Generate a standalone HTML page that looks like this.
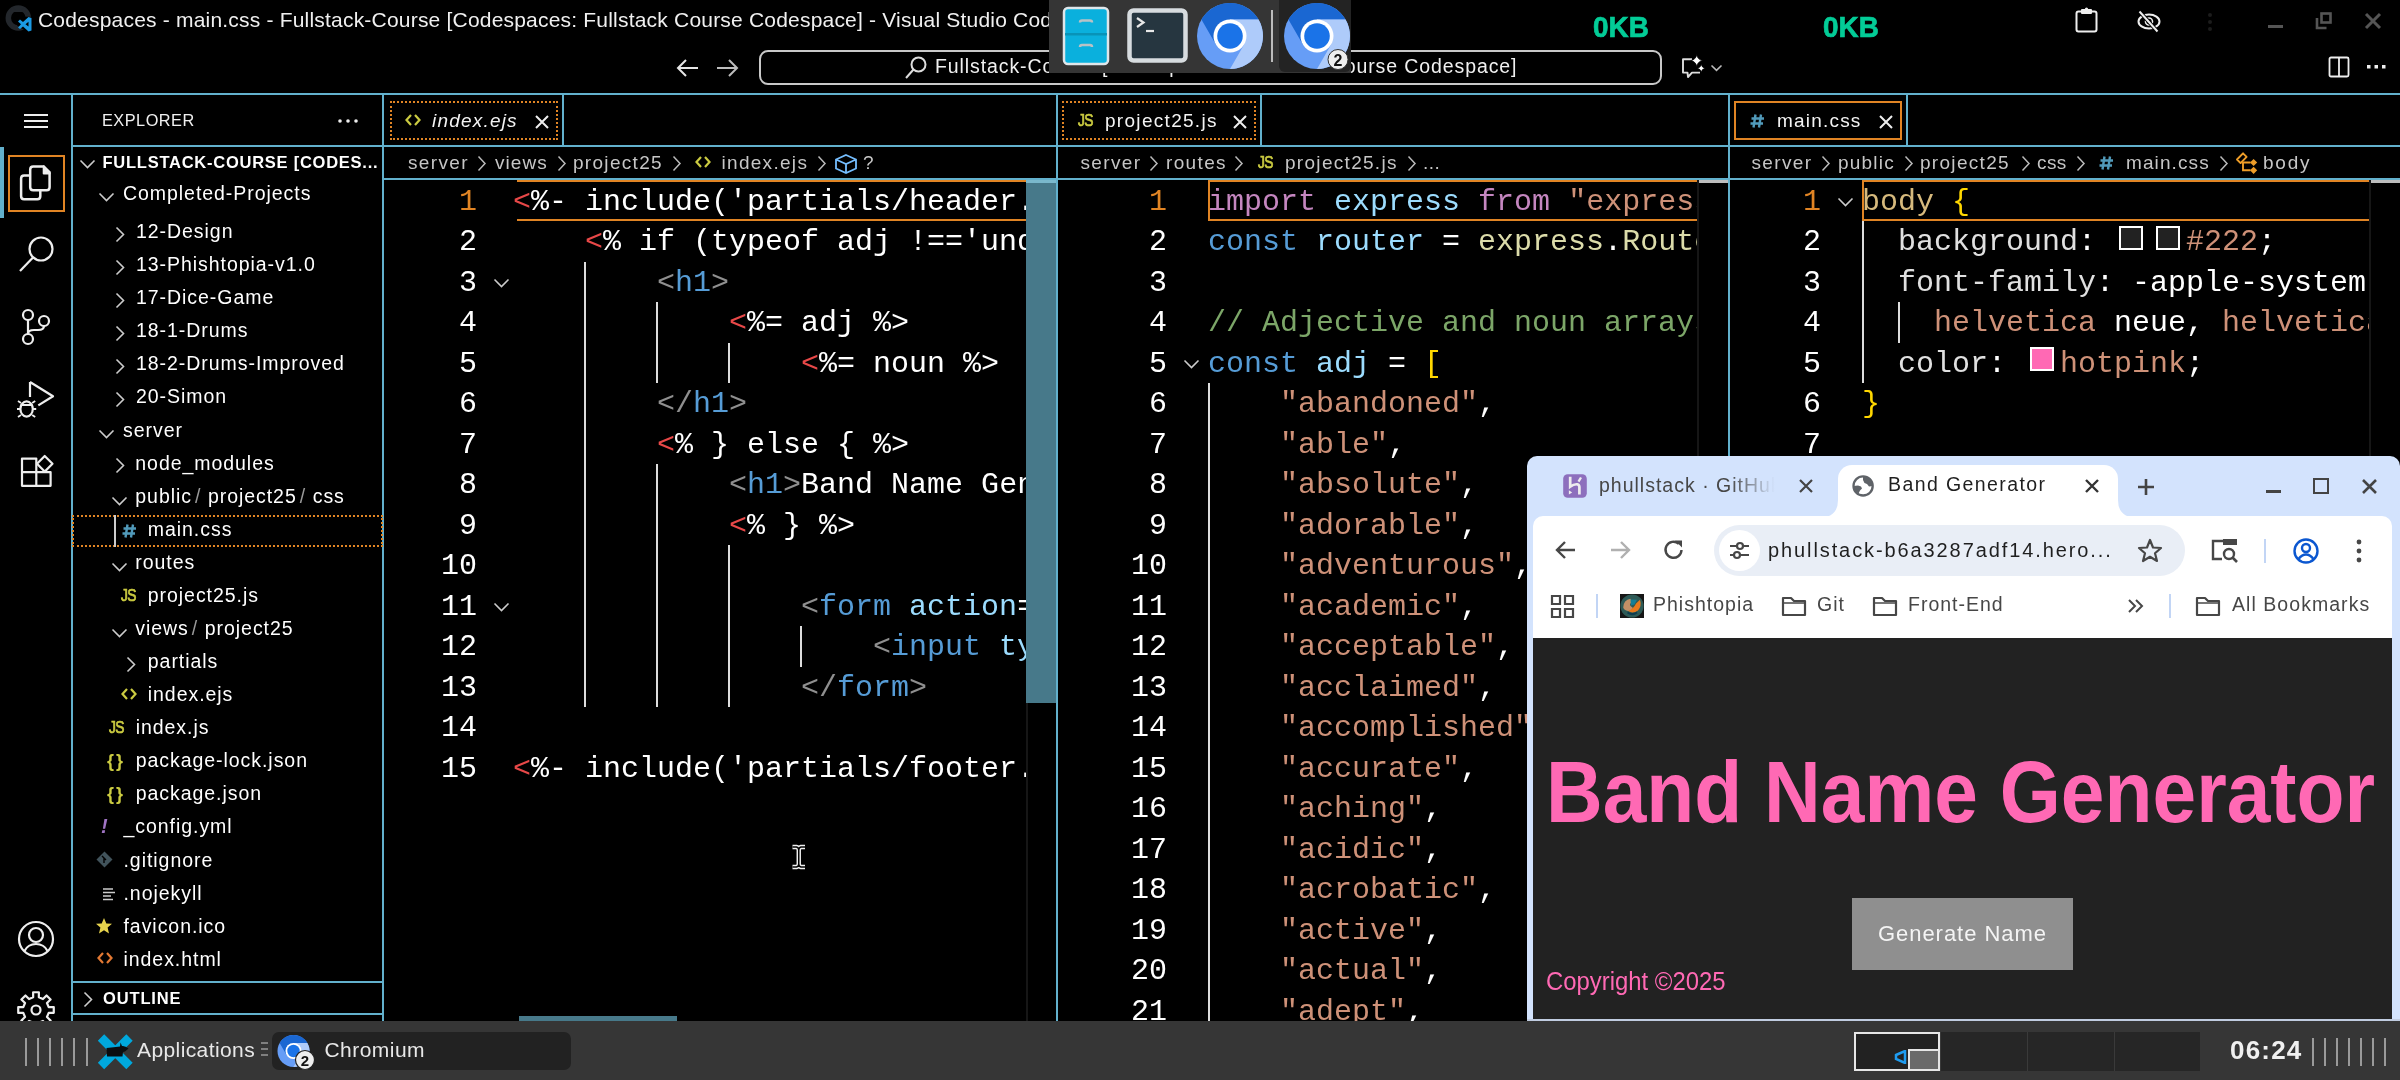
<!DOCTYPE html>
<html><head><meta charset="utf-8"><style>
*{margin:0;padding:0;box-sizing:border-box}
html,body{width:2400px;height:1080px;overflow:hidden;background:#000}
body{position:relative;font-family:"Liberation Sans",sans-serif}
#root{position:absolute;left:0;top:0;width:2400px;height:1080px;overflow:hidden;background:#000;will-change:transform}
div,svg{position:absolute}
.s{white-space:pre;line-height:1.117}
.m{white-space:pre;font-family:"Liberation Mono",monospace;font-size:30px;line-height:40.5px;height:40.5px;color:#fff}
.clip{overflow:hidden}
</style></head><body><div id="root">
<svg style="left:0px;top:0px;" width="36" height="36" viewBox="0 0 36 36"><circle cx="18.3" cy="18" r="10" fill="none" stroke="#23272c" stroke-width="5.5"/><path d="M10 12 L12 7 L16 10 H21 L25 7 L26 12 Z" fill="#23272c"/><path d="M17 20 L23 16.5 L32 17 V31.5 L27 31.5 L17 25.5 L19 22.5 Z" fill="#000"/><path d="M18 21.5 L20 19.5 L23 22 L28.5 17 L31.5 18 V30.5 L28.5 31.5 L23 26.5 L20 29 L18 27.5 L21 24.2 Z" fill="#1b9ae4"/><path d="M25.5 24.2 L28.5 21.8 V26.6 Z" fill="#000"/></svg>
<div class="s" style="left:38px;top:7.99px;font-size:21px;color:#f0f0f0;letter-spacing:0.2px;">Codespaces - main.css - Fullstack-Course [Codespaces: Fullstack Course Codespace] - Visual Studio Code</div>
<svg style="left:676px;top:58px;" width="24" height="20" viewBox="0 0 24 20"><path d="M2 10 H22 M10 2 L2 10 L10 18" fill="none" stroke="#e6e6e6" stroke-width="2"/></svg>
<svg style="left:715px;top:58px;" width="24" height="20" viewBox="0 0 24 20"><path d="M2 10 H22 M14 2 L22 10 L14 18" fill="none" stroke="#bdbdbd" stroke-width="2"/></svg>
<div style="left:759px;top:50px;width:903px;height:35px;border:2px solid #c8c8c8;border-radius:9px"></div>
<svg style="left:904px;top:55px;" width="24" height="25" viewBox="0 0 24 25"><circle cx="14.5" cy="9.5" r="7" fill="none" stroke="#ddd" stroke-width="2"/><path d="M9.5 14.5 L2 23" stroke="#ddd" stroke-width="2"/></svg>
<div class="s" style="left:935px;top:56.35px;font-size:19.5px;color:#f0f0f0;letter-spacing:0.9px;">Fullstack-Course [Codespaces: Fullstack Course Codespace]</div>
<svg style="left:1670px;top:45px;" width="60" height="45" viewBox="0 0 60 45"><path d="M22 14.3 H13 V27.6 H17.5 L18 32 L22 27.6 H30" fill="none" stroke="#ddd" stroke-width="1.9" stroke-linejoin="round"/><path d="M26.7 9.6 Q27.6 14.7 32.7 15.6 Q27.6 16.5 26.7 21.6 Q25.8 16.5 20.7 15.6 Q25.8 14.7 26.7 9.6 Z" fill="#fff" stroke="#000" stroke-width="0.8"/><path d="M31.25 19.3 Q31.9 22.65 35.25 23.3 Q31.9 23.95 31.25 27.3 Q30.6 23.95 27.25 23.3 Q30.6 22.65 31.25 19.3 Z" fill="#fff" stroke="#000" stroke-width="0.8"/><path d="M41.5 20.5 L46.5 25.4 L51.5 20.5" fill="none" stroke="#bbb" stroke-width="1.6"/></svg>
<svg style="left:2328px;top:56px;" width="22" height="22" viewBox="0 0 22 22"><rect x="1.5" y="1.5" width="19" height="19" rx="1.5" fill="none" stroke="#eee" stroke-width="1.8"/><path d="M11 2 V20" stroke="#eee" stroke-width="1.8"/></svg>
<svg style="left:2366px;top:63px;" width="22" height="8" viewBox="0 0 22 8"><rect x="1" y="2" width="3.5" height="3.5" fill="#eee"/><rect x="8.5" y="2" width="3.5" height="3.5" fill="#eee"/><rect x="16" y="2" width="3.5" height="3.5" fill="#eee"/></svg>
<div class="s" style="left:1592.5px;top:10.14px;font-size:30px;color:#03cc97;font-weight:bold;transform:scaleX(0.93);transform-origin:0 0;-webkit-text-stroke:0.7px #03cc97;">0KB</div>
<div class="s" style="left:1822.5px;top:10.14px;font-size:30px;color:#03cc97;font-weight:bold;transform:scaleX(0.93);transform-origin:0 0;-webkit-text-stroke:0.7px #03cc97;">0KB</div>
<svg style="left:2074px;top:7px;" width="26" height="26" viewBox="0 0 26 26"><rect x="2.5" y="4.5" width="20" height="20" rx="2" fill="none" stroke="#eee" stroke-width="2"/><rect x="7" y="2" width="11" height="5" rx="1" fill="#eee"/><circle cx="12.5" cy="2" r="1.6" fill="#eee"/></svg>
<svg style="left:2136px;top:10px;" width="28" height="24" viewBox="0 0 28 24"><ellipse cx="13" cy="11.5" rx="10.5" ry="7" fill="none" stroke="#eee" stroke-width="2"/><circle cx="13" cy="11.5" r="3.5" fill="none" stroke="#eee" stroke-width="1.6"/><path d="M4 2 L21 21" stroke="#000" stroke-width="4"/><path d="M3.5 1.5 L21.5 21.5" stroke="#eee" stroke-width="2"/></svg>
<svg style="left:2206px;top:12px;" width="8" height="20" viewBox="0 0 8 20"><circle cx="4" cy="3" r="2" fill="#1c1c1c"/><circle cx="4" cy="10" r="2" fill="#1c1c1c"/><circle cx="4" cy="17" r="2" fill="#1c1c1c"/></svg>
<div style="left:2268px;top:25px;width:15px;height:3px;background:#555"></div>
<svg style="left:2314px;top:11px;" width="20" height="20" viewBox="0 0 20 20"><rect x="7.5" y="2.5" width="9" height="9" fill="none" stroke="#555" stroke-width="2.6"/><path d="M3 7 V17 H12.5" fill="none" stroke="#555" stroke-width="2.6"/></svg>
<svg style="left:2364px;top:12px;" width="18" height="18" viewBox="0 0 18 18"><path d="M2 2 L16 16 M16 2 L2 16" stroke="#555" stroke-width="3"/></svg>
<div style="left:0px;top:93px;width:2400px;height:2px;background:#62b0cc"></div>
<div style="left:71px;top:93px;width:2px;height:928px;background:#62b0cc"></div>
<div style="left:382px;top:93px;width:2px;height:928px;background:#62b0cc"></div>
<div style="left:1056px;top:93px;width:2px;height:928px;background:#62b0cc"></div>
<div style="left:1728px;top:93px;width:2px;height:928px;background:#62b0cc"></div>
<div style="left:71px;top:145px;width:2329px;height:2px;background:#62b0cc"></div>
<div style="left:383px;top:178px;width:2017px;height:2px;background:#62b0cc"></div>
<div style="left:562px;top:93px;width:2px;height:53px;background:#62b0cc"></div>
<div style="left:1260px;top:93px;width:2px;height:53px;background:#62b0cc"></div>
<div style="left:1906px;top:93px;width:2px;height:53px;background:#62b0cc"></div>
<div style="left:71px;top:981px;width:312px;height:2px;background:#62b0cc"></div>
<div style="left:71px;top:1013px;width:312px;height:2px;background:#62b0cc"></div>
<svg style="left:22px;top:110px;" width="28" height="22" viewBox="0 0 28 22"><path d="M2 5 H26 M2 11 H26 M2 17 H26" stroke="#eee" stroke-width="2"/></svg>
<div style="left:0px;top:147px;width:4px;height:71px;background:#62b0cc"></div>
<div style="left:8px;top:155px;width:57px;height:57px;border:2px solid #e08424"></div>
<svg style="left:10px;top:155px;" width="52" height="56" viewBox="0 0 52 56"><path d="M23.2 11.4 H33.7 L39.6 17.3 V32.2 Q39.6 35.2 36.6 35.2 H23.2 Q20.2 35.2 20.2 32.2 V14.4 Q20.2 11.4 23.2 11.4 Z" fill="none" stroke="#eee" stroke-width="2.5"/><path d="M33.7 11.4 V18.4 H39.6 Z" fill="#eee" stroke="#eee" stroke-width="2" stroke-linejoin="round"/><path d="M20.2 20.5 H14.1 Q11.1 20.5 11.1 23.5 V41.3 Q11.1 44.3 14.1 44.3 H27.3 Q30.3 44.3 30.3 41.3 V35.2" fill="none" stroke="#eee" stroke-width="2.5"/></svg>
<svg style="left:16px;top:234px;" width="40" height="42" viewBox="0 0 40 42"><circle cx="25" cy="15" r="11.5" fill="none" stroke="#eee" stroke-width="2.2"/><path d="M17 23.5 L4 37" stroke="#eee" stroke-width="2.2"/></svg>
<svg style="left:16px;top:300px;" width="40" height="50" viewBox="0 0 40 50"><circle cx="12" cy="15" r="5" fill="none" stroke="#eee" stroke-width="2.2"/><circle cx="28" cy="21" r="5" fill="none" stroke="#eee" stroke-width="2.2"/><circle cx="12" cy="39" r="5" fill="none" stroke="#eee" stroke-width="2.2"/><path d="M12 20 V34 M28 26 Q28 30 22 30 H18 Q12 30 12 34" fill="none" stroke="#eee" stroke-width="2.2"/></svg>
<svg style="left:0px;top:370px;" width="72" height="60" viewBox="0 0 72 60"><path d="M30 12 V27 M30 12 L53 26.3 L38.3 35.4" fill="none" stroke="#eee" stroke-width="2.2" stroke-linejoin="round"/><ellipse cx="26.6" cy="39" rx="6.2" ry="7.6" fill="none" stroke="#eee" stroke-width="2.2"/><path d="M20.5 35 H32.7" stroke="#eee" stroke-width="2"/><path d="M18 31 L21 33 M17 39 H20.5 M18 47 L21 45 M35.2 31 L32.2 33 M36.2 39 H32.7 M35.2 47 L32.2 45" stroke="#eee" stroke-width="1.8"/></svg>
<svg style="left:0px;top:444px;" width="72" height="50" viewBox="0 0 72 50"><path d="M22 14.6 H36.3 V41.8 H22 Z M22 28.2 H50.6 V41.8 H36.3" fill="none" stroke="#eee" stroke-width="2.2" stroke-linejoin="round"/><path d="M44.7 12 L52.5 19.8 L44.7 27.6 L37 19.8 Z" fill="none" stroke="#eee" stroke-width="2.2" stroke-linejoin="round"/></svg>
<svg style="left:16px;top:919px;" width="40" height="40" viewBox="0 0 40 40"><circle cx="20" cy="20" r="17" fill="none" stroke="#eee" stroke-width="2.2"/><circle cx="20" cy="16" r="7" fill="none" stroke="#eee" stroke-width="2.2"/><path d="M8.5 32 Q12 25 20 25 Q28 25 31.5 32" fill="none" stroke="#eee" stroke-width="2.2"/></svg>
<div class="clip" style="left:10px;top:985px;width:52px;height:36px">
<svg style="left:0;top:0" width="52" height="52" viewBox="0 0 52 52"><polygon points="38.69,22.16 43.77,22.13 43.77,27.87 38.69,27.84 36.98,31.96 40.59,35.54 36.54,39.59 32.96,35.98 28.84,37.69 28.87,42.77 23.13,42.77 23.16,37.69 19.04,35.98 15.46,39.59 11.41,35.54 15.02,31.96 13.31,27.84 8.23,27.87 8.23,22.13 13.31,22.16 15.02,18.04 11.41,14.46 15.46,10.41 19.04,14.02 23.16,12.31 23.13,7.23 28.87,7.23 28.84,12.31 32.96,14.02 36.54,10.41 40.59,14.46 36.98,18.04" fill="none" stroke="#eee" stroke-width="2.2" stroke-linejoin="round"/><circle cx="26" cy="25" r="4.5" fill="none" stroke="#eee" stroke-width="2.2"/></svg>
</div>
<div class="s" style="left:102px;top:110.84px;font-size:16.3px;color:#f0f0f0;letter-spacing:0.5px;">EXPLORER</div>
<svg style="left:337px;top:117px;" width="22" height="8" viewBox="0 0 22 8"><circle cx="3" cy="4" r="1.8" fill="#eee"/><circle cx="11" cy="4" r="1.8" fill="#eee"/><circle cx="19" cy="4" r="1.8" fill="#eee"/></svg>
<svg style="left:79px;top:159px;" width="17" height="10" viewBox="0 0 17 10"><path d="M1.5 1.5 L8.5 8.5 L15.5 1.5" fill="none" stroke="#ccc" stroke-width="1.6"/></svg>
<div class="s" style="left:102.5px;top:153.06px;font-size:16.5px;color:#fff;letter-spacing:0.75px;font-weight:bold;">FULLSTACK-COURSE [CODES...</div>
<svg style="left:98px;top:192px;" width="17" height="10" viewBox="0 0 17 10"><path d="M1.5 1.5 L8.5 8.5 L15.5 1.5" fill="none" stroke="#ccc" stroke-width="1.6"/></svg>
<div class="s" style="left:123px;top:183.35px;font-size:19.5px;color:#fff;letter-spacing:0.95px;">Completed-Projects</div>
<svg style="left:115px;top:225.89999999999998px;" width="10" height="17" viewBox="0 0 10 17"><path d="M1.5 1.5 L8.5 8.5 L1.5 15.5" fill="none" stroke="#ccc" stroke-width="1.6"/></svg>
<div class="s" style="left:136px;top:221.05px;font-size:19.5px;color:#fff;letter-spacing:0.95px;">12-Design</div>
<svg style="left:115px;top:258.97999999999996px;" width="10" height="17" viewBox="0 0 10 17"><path d="M1.5 1.5 L8.5 8.5 L1.5 15.5" fill="none" stroke="#ccc" stroke-width="1.6"/></svg>
<div class="s" style="left:136px;top:254.13px;font-size:19.5px;color:#fff;letter-spacing:0.95px;">13-Phishtopia-v1.0</div>
<svg style="left:115px;top:292.06px;" width="10" height="17" viewBox="0 0 10 17"><path d="M1.5 1.5 L8.5 8.5 L1.5 15.5" fill="none" stroke="#ccc" stroke-width="1.6"/></svg>
<div class="s" style="left:136px;top:287.21px;font-size:19.5px;color:#fff;letter-spacing:0.95px;">17-Dice-Game</div>
<svg style="left:115px;top:325.14px;" width="10" height="17" viewBox="0 0 10 17"><path d="M1.5 1.5 L8.5 8.5 L1.5 15.5" fill="none" stroke="#ccc" stroke-width="1.6"/></svg>
<div class="s" style="left:136px;top:320.29px;font-size:19.5px;color:#fff;letter-spacing:0.95px;">18-1-Drums</div>
<svg style="left:115px;top:358.21999999999997px;" width="10" height="17" viewBox="0 0 10 17"><path d="M1.5 1.5 L8.5 8.5 L1.5 15.5" fill="none" stroke="#ccc" stroke-width="1.6"/></svg>
<div class="s" style="left:136px;top:353.37px;font-size:19.5px;color:#fff;letter-spacing:0.95px;">18-2-Drums-Improved</div>
<svg style="left:115px;top:391.29999999999995px;" width="10" height="17" viewBox="0 0 10 17"><path d="M1.5 1.5 L8.5 8.5 L1.5 15.5" fill="none" stroke="#ccc" stroke-width="1.6"/></svg>
<div class="s" style="left:136px;top:386.45px;font-size:19.5px;color:#fff;letter-spacing:0.95px;">20-Simon</div>
<svg style="left:98px;top:429.37999999999994px;" width="17" height="10" viewBox="0 0 17 10"><path d="M1.5 1.5 L8.5 8.5 L15.5 1.5" fill="none" stroke="#ccc" stroke-width="1.6"/></svg>
<div class="s" style="left:123px;top:419.53px;font-size:19.5px;color:#fff;letter-spacing:0.95px;">server</div>
<svg style="left:115px;top:457.46px;" width="10" height="17" viewBox="0 0 10 17"><path d="M1.5 1.5 L8.5 8.5 L1.5 15.5" fill="none" stroke="#ccc" stroke-width="1.6"/></svg>
<div class="s" style="left:135.3px;top:452.61px;font-size:19.5px;color:#fff;letter-spacing:0.95px;">node_modules</div>
<svg style="left:111px;top:495.53999999999996px;" width="17" height="10" viewBox="0 0 17 10"><path d="M1.5 1.5 L8.5 8.5 L15.5 1.5" fill="none" stroke="#ccc" stroke-width="1.6"/></svg>
<div class="s" style="left:135.3px;top:485.69px;font-size:19.5px;color:#fff;letter-spacing:0.95px;">public</div>
<div class="s" style="left:194.94375000000002px;top:485.69px;font-size:19.5px;color:#999;">/</div>
<div class="s" style="left:207.94375000000002px;top:485.69px;font-size:19.5px;color:#fff;letter-spacing:0.95px;">project25</div>
<div class="s" style="left:299.71796875px;top:485.69px;font-size:19.5px;color:#999;">/</div>
<div class="s" style="left:312.71796875px;top:485.69px;font-size:19.5px;color:#fff;letter-spacing:0.95px;">css</div>
<div style="left:72px;top:515px;width:311px;height:32px;border:2px dotted #e08424"></div>
<div style="left:114px;top:515px;width:2px;height:32px;background:#ccc"></div>
<svg style="left:122px;top:524px;" width="15" height="14" viewBox="0 0 15 14"><path d="M5.5 0.5 L3.5 13.5 M11 0.5 L9 13.5 M1.5 4.5 H14 M0.5 9.5 H13" stroke="#519aba" stroke-width="2.4"/></svg>
<div class="s" style="left:147.8px;top:518.77px;font-size:19.5px;color:#fff;letter-spacing:0.95px;">main.css</div>
<svg style="left:111px;top:561.7px;" width="17" height="10" viewBox="0 0 17 10"><path d="M1.5 1.5 L8.5 8.5 L15.5 1.5" fill="none" stroke="#ccc" stroke-width="1.6"/></svg>
<div class="s" style="left:135.3px;top:551.85px;font-size:19.5px;color:#fff;letter-spacing:0.95px;">routes</div>
<div class="s" style="left:121px;top:587.10px;font-size:16px;color:#cbcb41;letter-spacing:-0.6px;transform:scaleX(0.86);transform-origin:0 0;-webkit-text-stroke:0.7px #cbcb41;">JS</div>
<div class="s" style="left:147.8px;top:584.93px;font-size:19.5px;color:#fff;letter-spacing:0.95px;">project25.js</div>
<svg style="left:111px;top:627.86px;" width="17" height="10" viewBox="0 0 17 10"><path d="M1.5 1.5 L8.5 8.5 L15.5 1.5" fill="none" stroke="#ccc" stroke-width="1.6"/></svg>
<div class="s" style="left:135.3px;top:618.01px;font-size:19.5px;color:#fff;letter-spacing:0.95px;">views</div>
<div class="s" style="left:191.8px;top:618.01px;font-size:19.5px;color:#999;">/</div>
<div class="s" style="left:204.8px;top:618.01px;font-size:19.5px;color:#fff;letter-spacing:0.95px;">project25</div>
<svg style="left:126px;top:655.94px;" width="10" height="17" viewBox="0 0 10 17"><path d="M1.5 1.5 L8.5 8.5 L1.5 15.5" fill="none" stroke="#ccc" stroke-width="1.6"/></svg>
<div class="s" style="left:147.8px;top:651.09px;font-size:19.5px;color:#fff;letter-spacing:0.95px;">partials</div>
<svg style="left:121px;top:687.8199999999999px;" width="16" height="12" viewBox="0 0 16 12"><path d="M6 1 L1.5 6 L6 11 M10 1 L14.5 6 L10 11" fill="none" stroke="#cbcb41" stroke-width="2.2"/></svg>
<div class="s" style="left:147.8px;top:684.17px;font-size:19.5px;color:#fff;letter-spacing:0.95px;">index.ejs</div>
<div class="s" style="left:108.5px;top:719.42px;font-size:16px;color:#cbcb41;letter-spacing:-0.6px;transform:scaleX(0.86);transform-origin:0 0;-webkit-text-stroke:0.7px #cbcb41;">JS</div>
<div class="s" style="left:135.7px;top:717.25px;font-size:19.5px;color:#fff;letter-spacing:0.95px;">index.js</div>
<div class="s" style="left:107px;top:750.68px;font-size:18px;color:#cbcb41;letter-spacing:2px;font-weight:bold;">{}</div>
<div class="s" style="left:135.7px;top:750.33px;font-size:19.5px;color:#fff;letter-spacing:0.95px;">package-lock.json</div>
<div class="s" style="left:107px;top:783.76px;font-size:18px;color:#cbcb41;letter-spacing:2px;font-weight:bold;">{}</div>
<div class="s" style="left:135.7px;top:783.41px;font-size:19.5px;color:#fff;letter-spacing:0.95px;">package.json</div>
<div class="s" style="left:101px;top:815.03px;font-size:20px;color:#a074c4;font-weight:bold;font-style:italic;">!</div>
<div class="s" style="left:123.5px;top:816.49px;font-size:19.5px;color:#fff;letter-spacing:0.95px;">_config.yml</div>
<svg style="left:96px;top:851.4200000000001px;" width="17" height="17" viewBox="0 0 17 17"><path d="M8.5 0.5 L16.5 8.5 L8.5 16.5 L0.5 8.5 Z" fill="#41535b"/><path d="M6 5 L10 9 M8 7 V12" stroke="#000" stroke-width="1.4"/></svg>
<div class="s" style="left:123.5px;top:849.57px;font-size:19.5px;color:#fff;letter-spacing:0.95px;">.gitignore</div>
<svg style="left:102px;top:886.5px;" width="14" height="14" viewBox="0 0 14 14"><path d="M1 2 H11 M1 5.5 H13 M1 9 H9 M1 12.5 H11" stroke="#ccc" stroke-width="1.6"/></svg>
<div class="s" style="left:123.5px;top:882.65px;font-size:19.5px;color:#fff;letter-spacing:0.95px;">.nojekyll</div>
<svg style="left:95px;top:916.5799999999999px;" width="18" height="18" viewBox="0 0 18 18"><path d="M9 1 L11.3 6.5 L17 6.8 L12.6 10.6 L14 16.5 L9 13.3 L4 16.5 L5.4 10.6 L1 6.8 L6.7 6.5 Z" fill="#e8d44d"/></svg>
<div class="s" style="left:123.5px;top:915.73px;font-size:19.5px;color:#fff;letter-spacing:0.95px;">favicon.ico</div>
<svg style="left:97px;top:952.46px;" width="16" height="12" viewBox="0 0 16 12"><path d="M6 1 L1.5 6 L6 11 M10 1 L14.5 6 L10 11" fill="none" stroke="#e37933" stroke-width="2.2"/></svg>
<div class="s" style="left:123.5px;top:948.81px;font-size:19.5px;color:#fff;letter-spacing:0.95px;">index.html</div>
<svg style="left:83px;top:991px;" width="10" height="17" viewBox="0 0 10 17"><path d="M1.5 1.5 L8.5 8.5 L1.5 15.5" fill="none" stroke="#ccc" stroke-width="1.6"/></svg>
<div class="s" style="left:103px;top:989.06px;font-size:16.5px;color:#fff;letter-spacing:0.85px;font-weight:bold;">OUTLINE</div>
<div style="left:390px;top:101px;width:168px;height:39px;border:2px dotted #e08424"></div>
<svg style="left:405px;top:113.5px;" width="17" height="13" viewBox="0 0 17 13"><path d="M6 1 L1.5 6 L6 11 M10 1 L14.5 6 L10 11" fill="none" stroke="#cbcb41" stroke-width="2.2"/></svg>
<div class="s" style="left:432px;top:110.00px;font-size:19px;color:#f4f4f4;letter-spacing:1.2px;font-style:italic;">index.ejs</div>
<svg style="left:534px;top:114px;" width="16" height="16" viewBox="0 0 16 16"><path d="M2 2 L14 14 M14 2 L2 14" stroke="#eee" stroke-width="2"/></svg>
<div class="s" style="left:408px;top:151.80px;font-size:19px;color:#c6c6c6;letter-spacing:1.35px;">server</div>
<svg style="left:477px;top:155px;" width="10" height="17" viewBox="0 0 10 17"><path d="M1.5 1.5 L8 8.5 L1.5 15.5" fill="none" stroke="#bbb" stroke-width="1.5"/></svg>
<div class="s" style="left:495px;top:151.80px;font-size:19px;color:#c6c6c6;letter-spacing:1.05px;">views</div>
<svg style="left:557px;top:155px;" width="10" height="17" viewBox="0 0 10 17"><path d="M1.5 1.5 L8 8.5 L1.5 15.5" fill="none" stroke="#bbb" stroke-width="1.5"/></svg>
<div class="s" style="left:573px;top:151.80px;font-size:19px;color:#c6c6c6;letter-spacing:1.3px;">project25</div>
<svg style="left:672px;top:155px;" width="10" height="17" viewBox="0 0 10 17"><path d="M1.5 1.5 L8 8.5 L1.5 15.5" fill="none" stroke="#bbb" stroke-width="1.5"/></svg>
<svg style="left:695px;top:155.5px;" width="18" height="13" viewBox="0 0 18 13"><path d="M6 1 L1.5 6 L6 11 M10 1 L14.5 6 L10 11" fill="none" stroke="#cbcb41" stroke-width="2.2"/></svg>
<div class="s" style="left:721.5px;top:151.80px;font-size:19px;color:#c6c6c6;letter-spacing:1.3px;">index.ejs</div>
<svg style="left:817px;top:155px;" width="10" height="17" viewBox="0 0 10 17"><path d="M1.5 1.5 L8 8.5 L1.5 15.5" fill="none" stroke="#bbb" stroke-width="1.5"/></svg>
<svg style="left:834px;top:153px;" width="24" height="22" viewBox="0 0 24 22"><path d="M12 2 L22 6.5 V15.5 L12 20 L2 15.5 V6.5 Z M2 6.5 L12 11 L22 6.5 M12 11 V20" fill="none" stroke="#75beff" stroke-width="1.8"/></svg>
<div class="s" style="left:863px;top:151.80px;font-size:19px;color:#c6c6c6;">?</div>
<div style="left:517px;top:180px;width:509px;height:41px;border:2px solid #e08424;border-right:none;border-left:none;"></div>
<div class="m" style="left:397px;top:181.70px;width:80px;text-align:right;color:#e08424">1</div>
<div class="m" style="left:397px;top:222.20px;width:80px;text-align:right;color:#fff">2</div>
<div class="m" style="left:397px;top:262.70px;width:80px;text-align:right;color:#fff">3</div>
<div class="m" style="left:397px;top:303.20px;width:80px;text-align:right;color:#fff">4</div>
<div class="m" style="left:397px;top:343.70px;width:80px;text-align:right;color:#fff">5</div>
<div class="m" style="left:397px;top:384.20px;width:80px;text-align:right;color:#fff">6</div>
<div class="m" style="left:397px;top:424.70px;width:80px;text-align:right;color:#fff">7</div>
<div class="m" style="left:397px;top:465.20px;width:80px;text-align:right;color:#fff">8</div>
<div class="m" style="left:397px;top:505.70px;width:80px;text-align:right;color:#fff">9</div>
<div class="m" style="left:397px;top:546.20px;width:80px;text-align:right;color:#fff">10</div>
<div class="m" style="left:397px;top:586.70px;width:80px;text-align:right;color:#fff">11</div>
<div class="m" style="left:397px;top:627.20px;width:80px;text-align:right;color:#fff">12</div>
<div class="m" style="left:397px;top:667.70px;width:80px;text-align:right;color:#fff">13</div>
<div class="m" style="left:397px;top:708.20px;width:80px;text-align:right;color:#fff">14</div>
<div class="m" style="left:397px;top:748.70px;width:80px;text-align:right;color:#fff">15</div>
<svg style="left:493px;top:278px;" width="17" height="10" viewBox="0 0 17 10"><path d="M1.5 1.5 L8.5 8.5 L15.5 1.5" fill="none" stroke="#ccc" stroke-width="1.6"/></svg>
<svg style="left:493px;top:602px;" width="17" height="10" viewBox="0 0 17 10"><path d="M1.5 1.5 L8.5 8.5 L15.5 1.5" fill="none" stroke="#ccc" stroke-width="1.6"/></svg>
<div style="left:584px;top:261.5px;width:2px;height:445.5px;background:#ddd;width:1.5px"></div>
<div style="left:656px;top:302.0px;width:2px;height:81.0px;background:#ddd;width:1.5px"></div>
<div style="left:656px;top:464.0px;width:2px;height:243.0px;background:#ddd;width:1.5px"></div>
<div style="left:728px;top:342.5px;width:2px;height:40.5px;background:#ddd;width:1.5px"></div>
<div style="left:728px;top:545.0px;width:2px;height:162.0px;background:#ddd;width:1.5px"></div>
<div style="left:800px;top:626.0px;width:2px;height:40.5px;background:#ddd;width:1.5px"></div>
<div class="m" style="left:513px;top:181.70px;width:513px;overflow:hidden"><span style="color:#e84848">&lt;</span><span style="color:#ffffff">%- include('partials/header.ejs') %&gt;</span></div>
<div class="m" style="left:513px;top:222.20px;width:513px;overflow:hidden"><span style="color:#ffffff">    </span><span style="color:#e84848">&lt;</span><span style="color:#ffffff">% if (typeof adj !=='undefined') { %&gt;</span></div>
<div class="m" style="left:513px;top:262.70px;width:513px;overflow:hidden"><span style="color:#ffffff">        </span><span style="color:#8f8f8f">&lt;</span><span style="color:#569cd6">h1</span><span style="color:#8f8f8f">&gt;</span></div>
<div class="m" style="left:513px;top:303.20px;width:513px;overflow:hidden"><span style="color:#ffffff">            </span><span style="color:#e84848">&lt;</span><span style="color:#ffffff">%= adj %&gt;</span></div>
<div class="m" style="left:513px;top:343.70px;width:513px;overflow:hidden"><span style="color:#ffffff">                </span><span style="color:#e84848">&lt;</span><span style="color:#ffffff">%= noun %&gt;</span></div>
<div class="m" style="left:513px;top:384.20px;width:513px;overflow:hidden"><span style="color:#ffffff">        </span><span style="color:#8f8f8f">&lt;/</span><span style="color:#569cd6">h1</span><span style="color:#8f8f8f">&gt;</span></div>
<div class="m" style="left:513px;top:424.70px;width:513px;overflow:hidden"><span style="color:#ffffff">        </span><span style="color:#e84848">&lt;</span><span style="color:#ffffff">% } else { %&gt;</span></div>
<div class="m" style="left:513px;top:465.20px;width:513px;overflow:hidden"><span style="color:#ffffff">            </span><span style="color:#8f8f8f">&lt;</span><span style="color:#569cd6">h1</span><span style="color:#8f8f8f">&gt;</span><span style="color:#ffffff">Band Name Generator</span></div>
<div class="m" style="left:513px;top:505.70px;width:513px;overflow:hidden"><span style="color:#ffffff">            </span><span style="color:#e84848">&lt;</span><span style="color:#ffffff">% } %&gt;</span></div>
<div class="m" style="left:513px;top:586.70px;width:513px;overflow:hidden"><span style="color:#ffffff">                </span><span style="color:#8f8f8f">&lt;</span><span style="color:#569cd6">form</span><span style="color:#ffffff"> </span><span style="color:#9cdcfe">action</span><span style="color:#ffffff">=</span></div>
<div class="m" style="left:513px;top:627.20px;width:513px;overflow:hidden"><span style="color:#ffffff">                    </span><span style="color:#8f8f8f">&lt;</span><span style="color:#569cd6">input</span><span style="color:#ffffff"> </span><span style="color:#9cdcfe">type</span></div>
<div class="m" style="left:513px;top:667.70px;width:513px;overflow:hidden"><span style="color:#ffffff">                </span><span style="color:#8f8f8f">&lt;/</span><span style="color:#569cd6">form</span><span style="color:#8f8f8f">&gt;</span></div>
<div class="m" style="left:513px;top:748.70px;width:513px;overflow:hidden"><span style="color:#e84848">&lt;</span><span style="color:#ffffff">%- include('partials/footer.ejs') %&gt;</span></div>
<div style="left:1026px;top:180px;width:30px;height:523px;background:#47798a"></div>
<div style="left:1026px;top:180px;width:30px;height:3px;background:#7ab8cc"></div>
<div style="left:519px;top:1016px;width:158px;height:5px;background:#47798a"></div>
<div style="left:1026px;top:703px;width:1.5px;height:318px;background:#161616"></div>
<div style="left:1062px;top:101px;width:194px;height:39px;border:2px dotted #e08424"></div>
<div class="s" style="left:1077.5px;top:111.52px;font-size:16px;color:#cbcb41;letter-spacing:-0.6px;transform:scaleX(0.86);transform-origin:0 0;-webkit-text-stroke:0.7px #cbcb41;">JS</div>
<div class="s" style="left:1105px;top:110.00px;font-size:19px;color:#f4f4f4;letter-spacing:1.3px;">project25.js</div>
<svg style="left:1232px;top:114px;" width="16" height="16" viewBox="0 0 16 16"><path d="M2 2 L14 14 M14 2 L2 14" stroke="#eee" stroke-width="2"/></svg>
<div class="s" style="left:1080.5px;top:151.80px;font-size:19px;color:#c6c6c6;letter-spacing:1.35px;">server</div>
<svg style="left:1149px;top:155px;" width="10" height="17" viewBox="0 0 10 17"><path d="M1.5 1.5 L8 8.5 L1.5 15.5" fill="none" stroke="#bbb" stroke-width="1.5"/></svg>
<div class="s" style="left:1166px;top:151.80px;font-size:19px;color:#c6c6c6;letter-spacing:1.35px;">routes</div>
<svg style="left:1234px;top:155px;" width="10" height="17" viewBox="0 0 10 17"><path d="M1.5 1.5 L8 8.5 L1.5 15.5" fill="none" stroke="#bbb" stroke-width="1.5"/></svg>
<div class="s" style="left:1258px;top:153.52px;font-size:16px;color:#cbcb41;letter-spacing:-0.6px;transform:scaleX(0.86);transform-origin:0 0;-webkit-text-stroke:0.7px #cbcb41;">JS</div>
<div class="s" style="left:1285px;top:151.80px;font-size:19px;color:#c6c6c6;letter-spacing:1.3px;">project25.js</div>
<svg style="left:1407px;top:155px;" width="10" height="17" viewBox="0 0 10 17"><path d="M1.5 1.5 L8 8.5 L1.5 15.5" fill="none" stroke="#bbb" stroke-width="1.5"/></svg>
<div class="s" style="left:1423px;top:151.80px;font-size:19px;color:#c6c6c6;letter-spacing:0.5px;">...</div>
<div style="left:1208px;top:180px;width:490px;height:41px;border:2px solid #e08424;border-right:none;"></div>
<div class="m" style="left:1087px;top:181.70px;width:80px;text-align:right;color:#e08424">1</div>
<div class="m" style="left:1087px;top:222.20px;width:80px;text-align:right;color:#fff">2</div>
<div class="m" style="left:1087px;top:262.70px;width:80px;text-align:right;color:#fff">3</div>
<div class="m" style="left:1087px;top:303.20px;width:80px;text-align:right;color:#fff">4</div>
<div class="m" style="left:1087px;top:343.70px;width:80px;text-align:right;color:#fff">5</div>
<div class="m" style="left:1087px;top:384.20px;width:80px;text-align:right;color:#fff">6</div>
<div class="m" style="left:1087px;top:424.70px;width:80px;text-align:right;color:#fff">7</div>
<div class="m" style="left:1087px;top:465.20px;width:80px;text-align:right;color:#fff">8</div>
<div class="m" style="left:1087px;top:505.70px;width:80px;text-align:right;color:#fff">9</div>
<div class="m" style="left:1087px;top:546.20px;width:80px;text-align:right;color:#fff">10</div>
<div class="m" style="left:1087px;top:586.70px;width:80px;text-align:right;color:#fff">11</div>
<div class="m" style="left:1087px;top:627.20px;width:80px;text-align:right;color:#fff">12</div>
<div class="m" style="left:1087px;top:667.70px;width:80px;text-align:right;color:#fff">13</div>
<div class="m" style="left:1087px;top:708.20px;width:80px;text-align:right;color:#fff">14</div>
<div class="m" style="left:1087px;top:748.70px;width:80px;text-align:right;color:#fff">15</div>
<div class="m" style="left:1087px;top:789.20px;width:80px;text-align:right;color:#fff">16</div>
<div class="m" style="left:1087px;top:829.70px;width:80px;text-align:right;color:#fff">17</div>
<div class="m" style="left:1087px;top:870.20px;width:80px;text-align:right;color:#fff">18</div>
<div class="m" style="left:1087px;top:910.70px;width:80px;text-align:right;color:#fff">19</div>
<div class="m" style="left:1087px;top:951.20px;width:80px;text-align:right;color:#fff">20</div>
<div class="m" style="left:1087px;top:991.70px;width:80px;text-align:right;color:#fff">21</div>
<svg style="left:1183px;top:359px;" width="17" height="10" viewBox="0 0 17 10"><path d="M1.5 1.5 L8.5 8.5 L15.5 1.5" fill="none" stroke="#ccc" stroke-width="1.6"/></svg>
<div style="left:1208px;top:383.0px;width:2px;height:648.0px;background:#ddd;width:1.5px"></div>
<div class="m" style="left:1208px;top:181.70px;width:490px;overflow:hidden"><span style="color:#c586c0">import</span><span style="color:#ffffff"> </span><span style="color:#9cdcfe">express</span><span style="color:#ffffff"> </span><span style="color:#c586c0">from</span><span style="color:#ffffff"> </span><span style="color:#ce9178">"express";</span></div>
<div class="m" style="left:1208px;top:222.20px;width:490px;overflow:hidden"><span style="color:#569cd6">const</span><span style="color:#ffffff"> </span><span style="color:#9cdcfe">router</span><span style="color:#ffffff"> = </span><span style="color:#dcdcaa">express</span><span style="color:#ffffff">.</span><span style="color:#dcdcaa">Router</span><span style="color:#ffffff">();</span></div>
<div class="m" style="left:1208px;top:303.20px;width:490px;overflow:hidden"><span style="color:#7ca668">// Adjective and noun arrays</span></div>
<div class="m" style="left:1208px;top:343.70px;width:490px;overflow:hidden"><span style="color:#569cd6">const</span><span style="color:#ffffff"> </span><span style="color:#9cdcfe">adj</span><span style="color:#ffffff"> = </span><span style="color:#ffd700">[</span></div>
<div class="m" style="left:1208px;top:384.20px;width:490px;overflow:hidden"><span style="color:#ffffff">    </span><span style="color:#ce9178">"abandoned"</span><span style="color:#ffffff">,</span></div>
<div class="m" style="left:1208px;top:424.70px;width:490px;overflow:hidden"><span style="color:#ffffff">    </span><span style="color:#ce9178">"able"</span><span style="color:#ffffff">,</span></div>
<div class="m" style="left:1208px;top:465.20px;width:490px;overflow:hidden"><span style="color:#ffffff">    </span><span style="color:#ce9178">"absolute"</span><span style="color:#ffffff">,</span></div>
<div class="m" style="left:1208px;top:505.70px;width:490px;overflow:hidden"><span style="color:#ffffff">    </span><span style="color:#ce9178">"adorable"</span><span style="color:#ffffff">,</span></div>
<div class="m" style="left:1208px;top:546.20px;width:490px;overflow:hidden"><span style="color:#ffffff">    </span><span style="color:#ce9178">"adventurous"</span><span style="color:#ffffff">,</span></div>
<div class="m" style="left:1208px;top:586.70px;width:490px;overflow:hidden"><span style="color:#ffffff">    </span><span style="color:#ce9178">"academic"</span><span style="color:#ffffff">,</span></div>
<div class="m" style="left:1208px;top:627.20px;width:490px;overflow:hidden"><span style="color:#ffffff">    </span><span style="color:#ce9178">"acceptable"</span><span style="color:#ffffff">,</span></div>
<div class="m" style="left:1208px;top:667.70px;width:490px;overflow:hidden"><span style="color:#ffffff">    </span><span style="color:#ce9178">"acclaimed"</span><span style="color:#ffffff">,</span></div>
<div class="m" style="left:1208px;top:708.20px;width:490px;overflow:hidden"><span style="color:#ffffff">    </span><span style="color:#ce9178">"accomplished"</span><span style="color:#ffffff">,</span></div>
<div class="m" style="left:1208px;top:748.70px;width:490px;overflow:hidden"><span style="color:#ffffff">    </span><span style="color:#ce9178">"accurate"</span><span style="color:#ffffff">,</span></div>
<div class="m" style="left:1208px;top:789.20px;width:490px;overflow:hidden"><span style="color:#ffffff">    </span><span style="color:#ce9178">"aching"</span><span style="color:#ffffff">,</span></div>
<div class="m" style="left:1208px;top:829.70px;width:490px;overflow:hidden"><span style="color:#ffffff">    </span><span style="color:#ce9178">"acidic"</span><span style="color:#ffffff">,</span></div>
<div class="m" style="left:1208px;top:870.20px;width:490px;overflow:hidden"><span style="color:#ffffff">    </span><span style="color:#ce9178">"acrobatic"</span><span style="color:#ffffff">,</span></div>
<div class="m" style="left:1208px;top:910.70px;width:490px;overflow:hidden"><span style="color:#ffffff">    </span><span style="color:#ce9178">"active"</span><span style="color:#ffffff">,</span></div>
<div class="m" style="left:1208px;top:951.20px;width:490px;overflow:hidden"><span style="color:#ffffff">    </span><span style="color:#ce9178">"actual"</span><span style="color:#ffffff">,</span></div>
<div class="m" style="left:1208px;top:991.70px;width:490px;overflow:hidden"><span style="color:#ffffff">    </span><span style="color:#ce9178">"adept"</span><span style="color:#ffffff">,</span></div>
<div style="left:1698px;top:180px;width:30px;height:3px;background:#bdbdbd"></div>
<div style="left:1697px;top:180px;width:1.5px;height:841px;background:#161616"></div>
<div style="left:1734px;top:101px;width:168px;height:39px;border:2px solid #e08424"></div>
<svg style="left:1750px;top:114px;" width="15" height="14" viewBox="0 0 15 14"><path d="M5.5 0.5 L3.5 13.5 M11 0.5 L9 13.5 M1.5 4.5 H14 M0.5 9.5 H13" stroke="#519aba" stroke-width="2.4"/></svg>
<div class="s" style="left:1777px;top:110.00px;font-size:19px;color:#f4f4f4;letter-spacing:1.2px;">main.css</div>
<svg style="left:1878px;top:114px;" width="16" height="16" viewBox="0 0 16 16"><path d="M2 2 L14 14 M14 2 L2 14" stroke="#eee" stroke-width="2"/></svg>
<div class="s" style="left:1751.5px;top:151.80px;font-size:19px;color:#c6c6c6;letter-spacing:1.35px;">server</div>
<svg style="left:1821px;top:155px;" width="10" height="17" viewBox="0 0 10 17"><path d="M1.5 1.5 L8 8.5 L1.5 15.5" fill="none" stroke="#bbb" stroke-width="1.5"/></svg>
<div class="s" style="left:1838px;top:151.80px;font-size:19px;color:#c6c6c6;letter-spacing:1.2px;">public</div>
<svg style="left:1904px;top:155px;" width="10" height="17" viewBox="0 0 10 17"><path d="M1.5 1.5 L8 8.5 L1.5 15.5" fill="none" stroke="#bbb" stroke-width="1.5"/></svg>
<div class="s" style="left:1920px;top:151.80px;font-size:19px;color:#c6c6c6;letter-spacing:1.3px;">project25</div>
<svg style="left:2021px;top:155px;" width="10" height="17" viewBox="0 0 10 17"><path d="M1.5 1.5 L8 8.5 L1.5 15.5" fill="none" stroke="#bbb" stroke-width="1.5"/></svg>
<div class="s" style="left:2037px;top:151.80px;font-size:19px;color:#c6c6c6;letter-spacing:0.4px;">css</div>
<svg style="left:2076px;top:155px;" width="10" height="17" viewBox="0 0 10 17"><path d="M1.5 1.5 L8 8.5 L1.5 15.5" fill="none" stroke="#bbb" stroke-width="1.5"/></svg>
<svg style="left:2099px;top:156px;" width="15" height="14" viewBox="0 0 15 14"><path d="M5.5 0.5 L3.5 13.5 M11 0.5 L9 13.5 M1.5 4.5 H14 M0.5 9.5 H13" stroke="#519aba" stroke-width="2.4"/></svg>
<div class="s" style="left:2126px;top:151.80px;font-size:19px;color:#c6c6c6;letter-spacing:1.1px;">main.css</div>
<svg style="left:2219px;top:155px;" width="10" height="17" viewBox="0 0 10 17"><path d="M1.5 1.5 L8 8.5 L1.5 15.5" fill="none" stroke="#bbb" stroke-width="1.5"/></svg>
<svg style="left:2230px;top:148px;" width="32" height="32" viewBox="0 0 32 32"><path d="M7 11.5 L13 5.3 L16.6 8.9 L10.6 15.1 Z" fill="none" stroke="#ee9d28" stroke-width="1.9" stroke-linejoin="round"/><path d="M13 13.5 V22.3 H20.5 M13 14.5 H20.5" fill="none" stroke="#ee9d28" stroke-width="1.9"/><path d="M23.6 10.9 L27.2 14.5 L23.6 18.1 L20 14.5 Z M23.6 18.7 L27.2 22.3 L23.6 25.9 L20 22.3 Z" fill="#ee9d28"/></svg>
<div class="s" style="left:2263px;top:151.80px;font-size:19px;color:#c6c6c6;letter-spacing:1.8px;">body</div>
<div style="left:1862px;top:180px;width:508px;height:41px;border:2px solid #e08424;border-right:none;"></div>
<div class="m" style="left:1741px;top:181.70px;width:80px;text-align:right;color:#e08424">1</div>
<div class="m" style="left:1741px;top:222.20px;width:80px;text-align:right;color:#fff">2</div>
<div class="m" style="left:1741px;top:262.70px;width:80px;text-align:right;color:#fff">3</div>
<div class="m" style="left:1741px;top:303.20px;width:80px;text-align:right;color:#fff">4</div>
<div class="m" style="left:1741px;top:343.70px;width:80px;text-align:right;color:#fff">5</div>
<div class="m" style="left:1741px;top:384.20px;width:80px;text-align:right;color:#fff">6</div>
<div class="m" style="left:1741px;top:424.70px;width:80px;text-align:right;color:#fff">7</div>
<svg style="left:1837px;top:197px;" width="17" height="10" viewBox="0 0 17 10"><path d="M1.5 1.5 L8.5 8.5 L15.5 1.5" fill="none" stroke="#ccc" stroke-width="1.6"/></svg>
<div style="left:1862px;top:221.0px;width:2px;height:162.0px;background:#ddd;width:1.5px"></div>
<div style="left:1898px;top:302.0px;width:2px;height:40.5px;background:#ddd;width:1.5px"></div>
<div class="m" style="left:1862px;top:181.70px;width:508px;overflow:hidden"><span style="color:#d7ba7d">body</span><span style="color:#ffffff"> </span><span style="color:#ffd700">{</span></div>
<div class="m" style="left:1862px;top:222.20px;width:508px;overflow:hidden"><span style="color:#ffffff">  </span><span style="color:#e0e0e0">background</span><span style="color:#ffffff">: </span></div>
<div class="m" style="left:1862px;top:262.70px;width:508px;overflow:hidden"><span style="color:#ffffff">  </span><span style="color:#e0e0e0">font-family</span><span style="color:#ffffff">: -apple-system, BlinkMacSystemFont</span></div>
<div class="m" style="left:1862px;top:303.20px;width:508px;overflow:hidden"><span style="color:#ffffff">    </span><span style="color:#ce9178">helvetica</span><span style="color:#ffffff"> neue, </span><span style="color:#ce9178">helvetica</span></div>
<div class="m" style="left:1862px;top:343.70px;width:508px;overflow:hidden"><span style="color:#ffffff">  </span><span style="color:#e0e0e0">color</span><span style="color:#ffffff">: </span></div>
<div class="m" style="left:1862px;top:384.20px;width:508px;overflow:hidden"><span style="color:#ffd700">}</span></div>
<div style="left:2119px;top:225.5px;width:24px;height:24px;border:2.5px solid #fff;background:#222"></div>
<div style="left:2156px;top:225.5px;width:24px;height:24px;border:2.5px solid #fff;background:#222"></div>
<div class="m" style="left:2186px;top:222.20px;width:184px;overflow:hidden"><span style="color:#ce9178">#222</span><span style="color:#ffffff">;</span></div>
<div style="left:2030px;top:347px;width:24px;height:24px;border:2.5px solid #fff;background:hotpink"></div>
<div class="m" style="left:2060px;top:343.70px;width:310px;overflow:hidden"><span style="color:#ce9178">hotpink</span><span style="color:#ffffff">;</span></div>
<div style="left:2370px;top:180px;width:30px;height:3px;background:#bdbdbd"></div>
<div style="left:2369px;top:180px;width:1.5px;height:841px;background:#161616"></div>
<div style="left:1527px;top:456px;width:873px;height:566px;background:#d3e3fd;border-radius:10px 10px 0 0"></div>
<svg style="left:1563px;top:474px;" width="24" height="24" viewBox="0 0 24 24"><rect x="0.2" y="0.2" width="23.6" height="23.5" rx="4.5" fill="#8d6fbd"/><path d="M7.2 2.8 V12.6 Q11 9.9 14.3 10.3 Q16.4 10.8 16.4 13.2 V20.6" stroke="#eee" stroke-width="2.7" fill="none"/><path d="M18 3.5 L15.5 7.6" stroke="#eee" stroke-width="2.3"/><path d="M5.9 16.2 L9.2 18.4 L5.9 20.6 Z" fill="#eee"/></svg>
<div class="s" style="left:1599px;top:475.35px;font-size:19.5px;color:#474747;letter-spacing:1.0px;">phullstack · GitHub</div>
<div style="left:1730px;top:466px;width:62px;height:40px;background:linear-gradient(to right, rgba(211,227,253,0), #d3e3fd 72%)"></div>
<svg style="left:1797px;top:477px;" width="18" height="18" viewBox="0 0 18 18"><path d="M3 3 L15 15 M15 3 L3 15" stroke="#444" stroke-width="2.2"/></svg>
<div style="left:1838px;top:465px;width:280px;height:60px;background:#fff;border-radius:14px 14px 0 0"></div>
<svg style="left:1818px;top:500px;" width="22" height="18" viewBox="0 0 22 18"><path d="M0 18 Q20 18 20 0 V18 Z" fill="#fff"/></svg>
<svg style="left:2116px;top:500px;" width="22" height="18" viewBox="0 0 22 18"><path d="M22 18 Q2 18 2 0 V18 Z" fill="#fff"/></svg>
<svg style="left:1852px;top:475px;" width="24" height="24" viewBox="0 0 24 24"><circle cx="11.1" cy="10.9" r="9.6" fill="none" stroke="#5f6368" stroke-width="2.3"/><path d="M11 1.5 L14 1.8 L18 4 L20.5 8.5 L20.8 11 L17 11.5 L15 9 L12.5 8 L11 5 Z" fill="#5f6368"/><path d="M1.5 11 L6 10.5 L9 11.5 L10 13.5 L8 15.5 L6.5 18.5 L4 17 L2 14 Z" fill="#5f6368"/></svg>
<div class="s" style="left:1888px;top:474.35px;font-size:19.5px;color:#1f1f1f;letter-spacing:1.4px;">Band Generator</div>
<svg style="left:2083px;top:477px;" width="18" height="18" viewBox="0 0 18 18"><path d="M3 3 L15 15 M15 3 L3 15" stroke="#333" stroke-width="2.4"/></svg>
<svg style="left:2137px;top:478px;" width="18" height="18" viewBox="0 0 18 18"><path d="M9 1 V17 M1 9 H17" stroke="#444" stroke-width="2.6"/></svg>
<div style="left:2266px;top:490px;width:15px;height:3px;background:#444"></div>
<div style="left:2313px;top:478px;width:16px;height:16px;border:2.6px solid #444"></div>
<svg style="left:2361px;top:478px;" width="17" height="17" viewBox="0 0 17 17"><path d="M2 2 L15 15 M15 2 L2 15" stroke="#444" stroke-width="2.6"/></svg>
<div style="left:1533px;top:516px;width:859px;height:506px;background:#fff;border-radius:10px 10px 0 0"></div>
<svg style="left:1555px;top:539px;" width="22" height="22" viewBox="0 0 22 22"><path d="M2 11 H20 M10 3 L2 11 L10 19" fill="none" stroke="#474747" stroke-width="2.4"/></svg>
<svg style="left:1609px;top:539px;" width="22" height="22" viewBox="0 0 22 22"><path d="M2 11 H20 M12 3 L20 11 L12 19" fill="none" stroke="#b0b0b0" stroke-width="2.4"/></svg>
<svg style="left:1662px;top:538px;" width="24" height="24" viewBox="0 0 24 24"><path d="M19.5 12 A8 8 0 1 1 16.8 5.8" fill="none" stroke="#474747" stroke-width="2.4"/><path d="M13 2.5 H20 V9.5 Z" fill="#474747"/></svg>
<div style="left:1714px;top:525px;width:471px;height:51px;background:#e9eef6;border-radius:26px"></div>
<div style="left:1719px;top:530px;width:41px;height:41px;background:#fff;border-radius:21px"></div>
<svg style="left:1728px;top:540px;" width="24" height="22" viewBox="0 0 24 22"><path d="M2 6 H9 M15 6 H21 M2 15 H6 M12 15 H21" stroke="#474747" stroke-width="2.2"/><circle cx="12" cy="6" r="3" fill="none" stroke="#474747" stroke-width="2.2"/><circle cx="9" cy="15" r="3" fill="none" stroke="#474747" stroke-width="2.2"/></svg>
<div class="s" style="left:1768px;top:538.89px;font-size:20px;color:#1f1f1f;letter-spacing:1.9px;">phullstack-b6a3287adf14.hero...</div>
<svg style="left:2137px;top:538px;" width="26" height="25" viewBox="0 0 26 25"><path d="M13 2 L16 9.5 L24 10 L18 15.3 L20 23 L13 18.8 L6 23 L8 15.3 L2 10 L10 9.5 Z" fill="none" stroke="#474747" stroke-width="2.2" stroke-linejoin="round"/></svg>
<svg style="left:2210px;top:538px;" width="30" height="26" viewBox="0 0 30 26"><path d="M12 21 H3 V3 H13" fill="none" stroke="#474747" stroke-width="2.4"/><rect x="13" y="1" width="14" height="6" fill="#474747"/><circle cx="19" cy="16" r="5" fill="none" stroke="#474747" stroke-width="2.4"/><path d="M22.5 19.5 L27 24" stroke="#474747" stroke-width="2.6"/></svg>
<div style="left:2264px;top:539px;width:2px;height:24px;background:#c2d5f5"></div>
<svg style="left:2292px;top:537px;" width="28" height="28" viewBox="0 0 28 28"><circle cx="14" cy="14" r="11.5" fill="none" stroke="#0b57d0" stroke-width="2.4"/><circle cx="14" cy="11" r="4" fill="none" stroke="#0b57d0" stroke-width="2.4"/><path d="M6.5 22 Q10 17.5 14 17.5 Q18 17.5 21.5 22" fill="none" stroke="#0b57d0" stroke-width="2.4"/></svg>
<svg style="left:2354px;top:539px;" width="10" height="24" viewBox="0 0 10 24"><circle cx="5" cy="3" r="2.4" fill="#474747"/><circle cx="5" cy="12" r="2.4" fill="#474747"/><circle cx="5" cy="21" r="2.4" fill="#474747"/></svg>
<svg style="left:1550px;top:594px;" width="26" height="26" viewBox="0 0 26 26"><path d="M2 2 H10 V10 H2 Z M15 2 H23 V10 H15 Z M2 15 H10 V23 H2 Z M15 15 H23 V23 H15 Z" fill="none" stroke="#474747" stroke-width="2.2"/></svg>
<div style="left:1596px;top:594px;width:2px;height:24px;background:#c2d5f5"></div>
<svg style="left:1620px;top:594px;" width="24" height="24" viewBox="0 0 24 24"><rect width="24" height="24" fill="#161616"/><circle cx="12" cy="12" r="11.6" fill="#2e5a56"/><path d="M3.2 13.5 Q3.5 6 10.5 4.8 L12 8 Q9 10 10.5 12 L13 14 Q11 17.5 8 17 Q4 16 3.2 13.5 Z" fill="#c39066"/><path d="M10.5 5.5 L17 5.8 L14.5 10.5 L11 11.5 Z" fill="#157f96"/><path d="M8 17 Q13.5 15 16 9.5 L20 5.8 Q22 12 18 16.5 Q13 20 8 17 Z" fill="#e8791c"/><path d="M7.5 18.5 Q12 21.5 17 18.5 Q12.5 21.8 7.5 18.5 Z" fill="#0d3d50" stroke="#0d3d50" stroke-width="2"/></svg>
<div class="s" style="left:1653px;top:594.35px;font-size:19.5px;color:#474747;letter-spacing:1.0px;">Phishtopia</div>
<svg style="left:1781px;top:595px;" width="26" height="22" viewBox="0 0 26 22"><path d="M2 3 H10 L13 6 H24 V20 H2 Z" fill="none" stroke="#474747" stroke-width="2.2" stroke-linejoin="round"/><path d="M2 8 H24" stroke="#474747" stroke-width="1.5"/></svg>
<div class="s" style="left:1817px;top:594.35px;font-size:19.5px;color:#474747;letter-spacing:1.0px;">Git</div>
<svg style="left:1872px;top:595px;" width="26" height="22" viewBox="0 0 26 22"><path d="M2 3 H10 L13 6 H24 V20 H2 Z" fill="none" stroke="#474747" stroke-width="2.2" stroke-linejoin="round"/><path d="M2 8 H24" stroke="#474747" stroke-width="1.5"/></svg>
<div class="s" style="left:1908px;top:594.35px;font-size:19.5px;color:#474747;letter-spacing:1.0px;">Front-End</div>
<svg style="left:2127px;top:597px;" width="18" height="18" viewBox="0 0 18 18"><path d="M2 3 L8 9 L2 15 M9 3 L15 9 L9 15" fill="none" stroke="#474747" stroke-width="2"/></svg>
<div style="left:2169px;top:594px;width:2px;height:24px;background:#c2d5f5"></div>
<svg style="left:2195px;top:595px;" width="26" height="22" viewBox="0 0 26 22"><path d="M2 3 H10 L13 6 H24 V20 H2 Z" fill="none" stroke="#474747" stroke-width="2.2" stroke-linejoin="round"/><path d="M2 8 H24" stroke="#474747" stroke-width="1.5"/></svg>
<div class="s" style="left:2232px;top:594.35px;font-size:19.5px;color:#474747;letter-spacing:1.05px;">All Bookmarks</div>
<div style="left:1533px;top:638px;width:859px;height:382px;background:#222"></div>
<div style="left:1527px;top:1019px;width:873px;height:3px;background:#c0cce0"></div>
<div class="s" style="left:1546px;top:743px;font-size:87px;font-weight:bold;color:#ff69b4;transform:scaleX(0.9025);transform-origin:0 0;line-height:1.117">Band Name Generator</div>
<div style="left:1852px;top:898px;width:221px;height:72px;background:#8f8f8f"></div>
<div class="s" style="left:1878px;top:922.38px;font-size:22px;color:#f4f4f4;letter-spacing:0.95px;">Generate Name</div>
<div class="s" style="left:1546px;top:967.77px;font-size:25px;color:#ff69b4;transform:scaleX(0.955);transform-origin:0 0;">Copyright ©2025</div>
<div style="left:1049px;top:0px;width:302px;height:73px;background:#353535"></div>
<div style="left:1279px;top:0px;width:72px;height:72px;background:#232323;border-radius:0 0 6px 6px"></div>
<svg style="left:1062px;top:6px;" width="48" height="60" viewBox="0 0 48 60"><rect x="2" y="2" width="44" height="56" rx="4" fill="#0ab0dd" stroke="#dfe6ea" stroke-width="2.5"/><path d="M3 28.3 H45" stroke="#0893b8" stroke-width="2.5"/><path d="M18 16.5 Q18 14.5 20 14.5 H28 Q30 14.5 30 16.5" fill="none" stroke="#b8c2c6" stroke-width="2.5"/><path d="M18 41 Q18 39 20 39 H28 Q30 39 30 41" fill="none" stroke="#b8c2c6" stroke-width="2.5"/></svg>
<svg style="left:1127px;top:8px;" width="62" height="56" viewBox="0 0 62 56"><rect x="2.5" y="2.5" width="56" height="50" rx="4" fill="#263640" stroke="#d7dcdf" stroke-width="4.5"/><path d="M10 10 L16.5 14.5 L10 19" fill="none" stroke="#e8e8e8" stroke-width="2.2"/><path d="M19 23 H27" stroke="#e8e8e8" stroke-width="2.2"/></svg>
<svg style="left:1190px;top:0px;" width="80" height="72" viewBox="0 0 80 72"><g transform="translate(40,36) scale(1.0)"><circle r="33" fill="#669df6"/><path d="M-28.58 -16.5 A33 33 0 0 1 28.58 -16.5 L0 -16.5 L0 0 L-14.29 8.25 Z" fill="#1a67d2"/><path d="M28.58 -16.5 A33 33 0 0 1 0 33 L14.29 8.25 L0 0 L0 -16.5 Z" fill="#aecbfa"/><circle r="16.5" fill="#fff"/><circle r="12.8" fill="#1a73e8"/></g></svg>
<div style="left:1271px;top:10px;width:2px;height:52px;background:#bbb"></div>
<svg style="left:1280px;top:0px;" width="72" height="72" viewBox="0 0 72 72"><g transform="translate(37,36) scale(1.0)"><circle r="33" fill="#669df6"/><path d="M-28.58 -16.5 A33 33 0 0 1 28.58 -16.5 L0 -16.5 L0 0 L-14.29 8.25 Z" fill="#1a67d2"/><path d="M28.58 -16.5 A33 33 0 0 1 0 33 L14.29 8.25 L0 0 L0 -16.5 Z" fill="#aecbfa"/><circle r="16.5" fill="#fff"/><circle r="12.8" fill="#1a73e8"/></g><circle cx="58" cy="59.5" r="10" fill="#eee" stroke="#333" stroke-width="1"/><text x="58" y="65.5" font-family="Liberation Sans" font-weight="bold" font-size="16" fill="#111" text-anchor="middle">2</text></svg>
<div style="left:0px;top:1021px;width:2400px;height:59px;background:#363636"></div>
<div style="left:25.0px;top:1038px;width:2px;height:28px;background:#9a9a9a"></div>
<div style="left:37.1px;top:1038px;width:2px;height:28px;background:#9a9a9a"></div>
<div style="left:49.2px;top:1038px;width:2px;height:28px;background:#9a9a9a"></div>
<div style="left:61.3px;top:1038px;width:2px;height:28px;background:#9a9a9a"></div>
<div style="left:73.4px;top:1038px;width:2px;height:28px;background:#9a9a9a"></div>
<div style="left:85.5px;top:1038px;width:2px;height:28px;background:#9a9a9a"></div>
<svg style="left:90px;top:1028px;" width="50" height="46" viewBox="0 0 50 46"><path d="M11 9.5 L39.5 38 M39.5 9.5 L11 38" stroke="#00a8dd" stroke-width="9"/><path d="M16.5 20 Q24 19 30 18.5 L30.5 14.5 L32 18 Q35 17.5 38.5 20.5 L35 23.5 L33 24 L32.5 28.5 L17 28.5 Z" fill="#0a0d10"/></svg>
<div class="s" style="left:137px;top:1038.49px;font-size:21px;color:#e8e8e8;letter-spacing:0.4px;">Applications</div>
<svg style="left:261px;top:1041px;" width="8" height="16" viewBox="0 0 8 16"><path d="M0 2 H7 M0 8 H7 M0 14 H7" stroke="#999" stroke-width="1.5"/></svg>
<div style="left:272px;top:1032px;width:299px;height:38px;background:#222;border-radius:7px"></div>
<svg style="left:276px;top:1034px;" width="36" height="36" viewBox="0 0 36 36"><g transform="translate(17.5,17) scale(0.48484848484848486)"><circle r="33" fill="#669df6"/><path d="M-28.58 -16.5 A33 33 0 0 1 28.58 -16.5 L0 -16.5 L0 0 L-14.29 8.25 Z" fill="#1a67d2"/><path d="M28.58 -16.5 A33 33 0 0 1 0 33 L14.29 8.25 L0 0 L0 -16.5 Z" fill="#aecbfa"/><circle r="16.5" fill="#fff"/><circle r="12.8" fill="#1a73e8"/></g></svg>
<svg style="left:294px;top:1049px;" width="22" height="22" viewBox="0 0 22 22"><circle cx="11" cy="11" r="9.5" fill="#eee" stroke="#222" stroke-width="1.2"/><text x="11" y="16.5" font-family="Liberation Sans" font-weight="bold" font-size="15" fill="#111" text-anchor="middle">2</text></svg>
<div class="s" style="left:324.5px;top:1038.49px;font-size:21px;color:#e8e8e8;letter-spacing:0.45px;">Chromium</div>
<div style="left:1854px;top:1032px;width:346px;height:39px;background:#262626"></div>
<div style="left:1939.5px;top:1032px;width:1px;height:39px;background:#3a3a3a"></div>
<div style="left:2026.5px;top:1032px;width:1px;height:39px;background:#3a3a3a"></div>
<div style="left:2113.5px;top:1032px;width:1px;height:39px;background:#3a3a3a"></div>
<div style="left:1854px;top:1032px;width:86px;height:39px;border:2px solid #e6e6e6;background:#222"></div>
<div style="left:1908px;top:1049px;width:32px;height:22px;background:#6a6a6a;border:2px solid #e6e6e6"></div>
<svg style="left:1893px;top:1050px;" width="16" height="14" viewBox="0 0 16 14"><path d="M3 5 L12 1 V13 L3 9 Z" fill="none" stroke="#1f9cf0" stroke-width="2.5"/></svg>
<div class="s" style="left:2230px;top:1035.96px;font-size:26px;color:#f0f0f0;letter-spacing:1.2px;font-weight:bold;">06:24</div>
<div style="left:2312px;top:1038px;width:2px;height:28px;background:#9a9a9a"></div>
<div style="left:2324px;top:1038px;width:2px;height:28px;background:#9a9a9a"></div>
<div style="left:2336px;top:1038px;width:2px;height:28px;background:#9a9a9a"></div>
<div style="left:2348px;top:1038px;width:2px;height:28px;background:#9a9a9a"></div>
<div style="left:2360px;top:1038px;width:2px;height:28px;background:#9a9a9a"></div>
<div style="left:2372px;top:1038px;width:2px;height:28px;background:#9a9a9a"></div>
<div style="left:2384px;top:1038px;width:2px;height:28px;background:#9a9a9a"></div>
<svg style="left:790px;top:842px;" width="18" height="30" viewBox="0 0 18 30"><path d="M2.5 5 H6.5 Q8.75 5.5 8.75 8 V22 Q8.75 24.5 6.5 25 H2.5 M15 5 H11 Q8.75 5.5 8.75 8 M15 25 H11 Q8.75 24.5 8.75 22" fill="none" stroke="#f0f0f0" stroke-width="4.4"/><path d="M2.5 5 H6.5 Q8.75 5.5 8.75 8 V22 Q8.75 24.5 6.5 25 H2.5 M15 5 H11 Q8.75 5.5 8.75 8 M15 25 H11 Q8.75 24.5 8.75 22" fill="none" stroke="#000" stroke-width="1.5"/></svg>
</div></body></html>
